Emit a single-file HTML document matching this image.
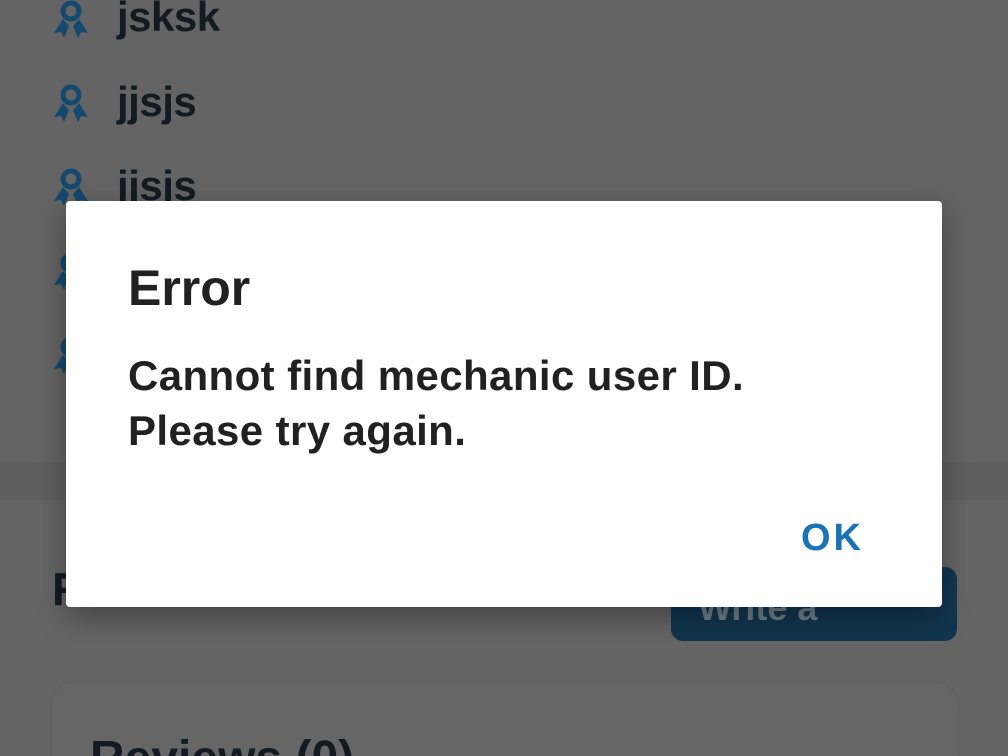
<!DOCTYPE html>
<html><head><meta charset="utf-8"><style>
html,body{margin:0;padding:0;width:1008px;height:756px;overflow:hidden;background:#656565;font-family:"Liberation Sans",sans-serif;position:relative;}
.top{position:absolute;left:0;top:0;width:1008px;height:462px;background:#646464;}
.band{position:absolute;left:0;top:462px;width:1008px;height:38px;background:#5f5f5f;}
.row{position:absolute;left:52px;height:50px;}
.row svg{position:absolute;left:0;top:0;}
.row span{position:absolute;left:65px;top:-6px;font-size:42px;font-weight:bold;color:#121a22;letter-spacing:-0.5px;white-space:nowrap;}
.btn{position:absolute;left:671px;top:567px;width:286px;height:74px;border-radius:12px;background:#12364f;}
.btn span{position:absolute;left:27px;top:20px;font-size:36px;font-weight:bold;color:#6f7f8a;}
.h2{position:absolute;left:52px;top:562px;font-size:46px;font-weight:bold;color:#121a22;}
.card{position:absolute;left:52px;top:683px;width:905px;height:73px;border-radius:22px 22px 0 0;background:#666;box-shadow:0 1px 4px rgba(0,0,0,.12);overflow:hidden;}
.card span{position:absolute;left:38px;top:48px;font-size:48px;font-weight:bold;color:#121a22;}
.dlg{position:absolute;left:66px;top:201px;width:876px;height:406px;background:#fff;border-radius:4px;box-shadow:0 10px 30px rgba(0,0,0,.35);}
.t{position:absolute;left:62px;top:58px;font-size:50px;font-weight:bold;color:#212121;}
.m{position:absolute;left:62px;top:147px;font-size:42px;font-weight:bold;color:#212121;line-height:55px;letter-spacing:0.4px;white-space:nowrap;}
.ok{position:absolute;left:735px;top:316px;font-size:38px;font-weight:bold;color:#1a73b5;letter-spacing:3px;}
</style></head><body>
<div class="top"></div><div class="band"></div>
<div class="row" style="top:0px"><svg width="38" height="40" viewBox="0 0 38 40" style="top:0px"><circle cx="19" cy="11" r="8" fill="none" stroke="#14496e" stroke-width="5"/><path d="M11 19 L2 33 L9 32 L12 38 L17 26Z M27 19 L36 33 L29 32 L26 38 L21 26Z" fill="#14496e"/></svg><span style="top:-7px">jsksk</span></div>
<div class="row" style="top:84px"><svg width="38" height="40" viewBox="0 0 38 40"><circle cx="19" cy="11" r="8" fill="none" stroke="#14496e" stroke-width="5"/><path d="M11 19 L2 33 L9 32 L12 38 L17 26Z M27 19 L36 33 L29 32 L26 38 L21 26Z" fill="#14496e"/></svg><span>jjsjs</span></div>
<div class="row" style="top:168px"><svg width="38" height="40" viewBox="0 0 38 40"><circle cx="19" cy="11" r="8" fill="none" stroke="#14496e" stroke-width="5"/><path d="M11 19 L2 33 L9 32 L12 38 L17 26Z M27 19 L36 33 L29 32 L26 38 L21 26Z" fill="#14496e"/></svg><span>jjsjs</span></div>
<div class="row" style="top:252px"><svg width="38" height="40" viewBox="0 0 38 40"><circle cx="19" cy="11" r="8" fill="none" stroke="#14496e" stroke-width="5"/><path d="M11 19 L2 33 L9 32 L12 38 L17 26Z M27 19 L36 33 L29 32 L26 38 L21 26Z" fill="#14496e"/></svg></div>
<div class="row" style="top:336px"><svg width="38" height="40" viewBox="0 0 38 40"><circle cx="19" cy="11" r="8" fill="none" stroke="#14496e" stroke-width="5"/><path d="M11 19 L2 33 L9 32 L12 38 L17 26Z M27 19 L36 33 L29 32 L26 38 L21 26Z" fill="#14496e"/></svg></div>
<div class="h2">Reviews</div>
<div class="btn"><span>Write a</span></div>
<div class="card"><span>Reviews (0)</span></div>
<div class="dlg">
<div class="t">Error</div>
<div class="m">Cannot find mechanic user ID.<br>Please try again.</div>
<div class="ok">OK</div>
</div>
</body></html>
